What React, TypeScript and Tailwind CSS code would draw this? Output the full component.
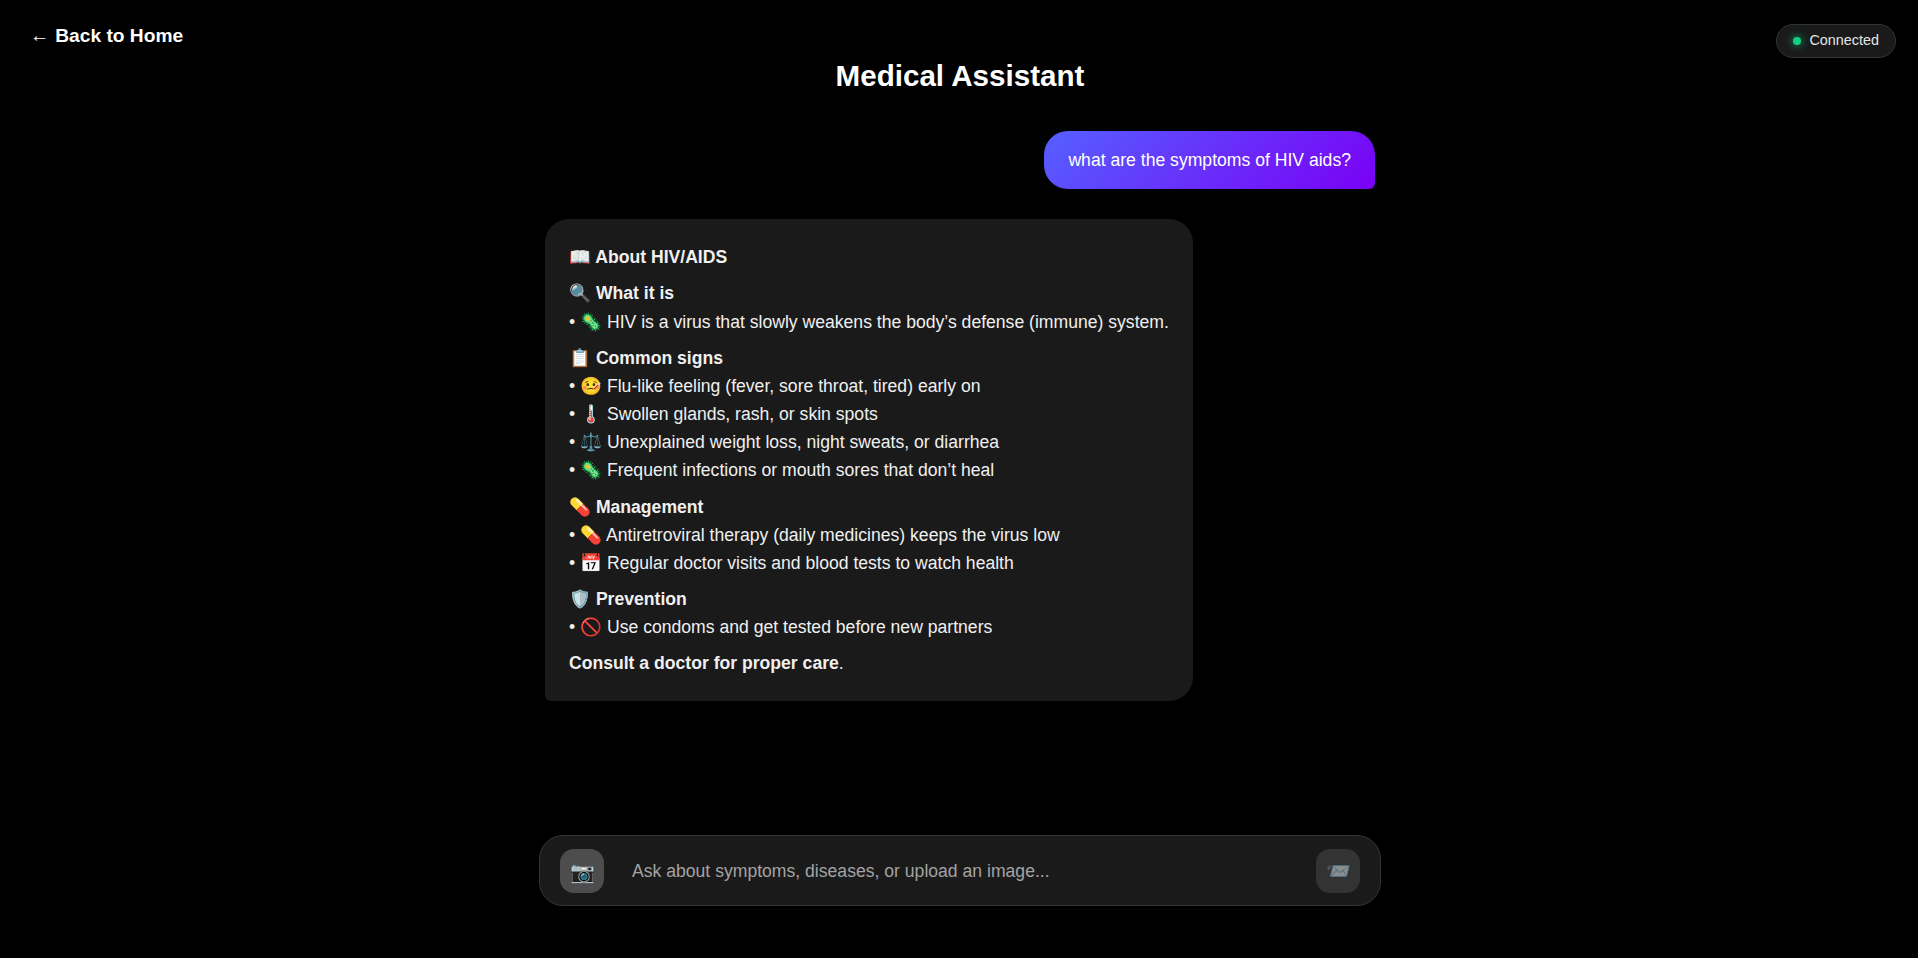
import React from "react";

type Section = {
  title: string;
  items: string[];
};

const sections: Section[] = [
  { title: "🔍 What it is", items: ["🦠 HIV is a virus that slowly weakens the body’s defense (immune) system."] },
  {
    title: "📋 Common signs",
    items: [
      "🤒 Flu-like feeling (fever, sore throat, tired) early on",
      "🌡️ Swollen glands, rash, or skin spots",
      "⚖️ Unexplained weight loss, night sweats, or diarrhea",
      "🦠 Frequent infections or mouth sores that don’t heal",
    ],
  },
  {
    title: "💊 Management",
    items: [
      "💊 Antiretroviral therapy (daily medicines) keeps the virus low",
      "📅 Regular doctor visits and blood tests to watch health",
    ],
  },
  { title: "🛡️ Prevention", items: ["🚫 Use condoms and get tested before new partners"] },
];

export default function App() {
  return (
    <div className="h-[958px] overflow-hidden bg-black text-white flex flex-col font-['Liberation_Sans',sans-serif]">
      <header className="flex justify-between items-start pl-[30px] pr-[22px] pt-6 h-[57px]">
        <a className="font-bold text-[19.2px] leading-[24px] flex items-center gap-1.5">
          <span className="font-normal text-[19.2px]">←</span>
          Back to Home
        </a>
        <div className="flex items-center gap-2 h-[34px] px-4 rounded-full bg-[#1a1a1a] border border-[#333] text-[#e5e5e5] text-[14.4px]">
          <span className="w-2 h-2 rounded-full bg-[#10d07f] shadow-[0_0_8px_#10b981]" />
          Connected
        </div>
      </header>
      <div className="flex-1 flex flex-col pl-[2px]">
        <h1 className="text-center font-bold text-[29.6px] leading-[37px]">Medical Assistant</h1>

        <main className="flex-1 w-[830px] mx-auto mt-[37px] flex flex-col">
          <div className="self-end h-[58px] px-6 flex items-center rounded-[24px] rounded-br-[6px] bg-[linear-gradient(135deg,#5560ff,#7a00f5)] text-[17.6px]">
            what are the symptoms of HIV aids?
          </div>
          <div className="self-start mt-[30px] px-6 pt-[24.32px] pb-[23.68px] rounded-[24px] rounded-bl-[6px] bg-[#1a1a1a] text-[17.6px] leading-[28.16px] text-[#f0f0f0]">
            <p className="font-bold">📖 About HIV/AIDS</p>
            {sections.map((s) => (
              <div key={s.title} className="mt-2">
                <p className="font-bold">{s.title}</p>
                {s.items.map((item, i) => (
                  <p key={i}>• {item}</p>
                ))}
              </div>
            ))}
            <p className="mt-2">
              <strong>Consult a doctor for proper care</strong>.
            </p>
          </div>
        </main>

        <div className="w-[842px] h-[71px] mx-auto mb-[52px] px-5 flex items-center rounded-[24px] bg-[#1a1a1a] border border-[#333]">
          <button className="w-11 h-11 pt-[3px] rounded-[14px] bg-[#4d4d4d] flex items-center justify-center text-[20px]">📷</button>
          <div className="flex-1 pl-7 pt-[1px] text-[17.6px] text-[#a3a3a3]">Ask about symptoms, diseases, or upload an image...</div>
          <button className="w-11 h-11 pt-[1px] rounded-[14px] bg-[#4d4d4d] flex items-center justify-center text-[20px] opacity-50">📨</button>
        </div>
      </div>
    </div>
  );
}
